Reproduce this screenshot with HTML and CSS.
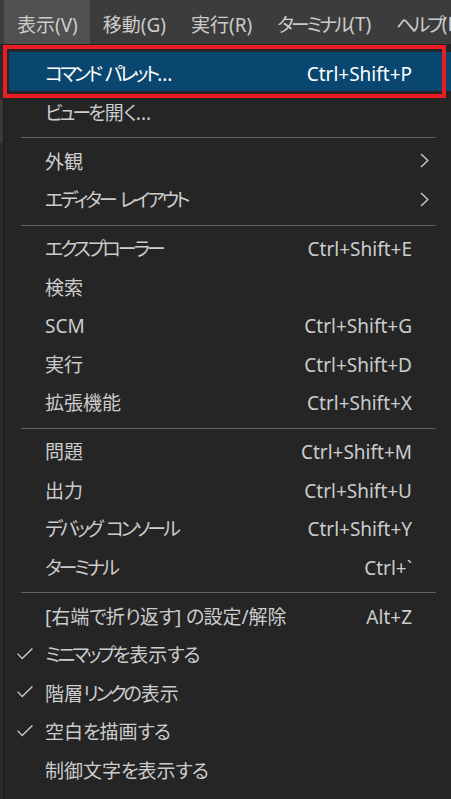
FILE: index.html
```html
<!DOCTYPE html>
<html lang="ja">
<head>
<meta charset="utf-8">
<link rel="stylesheet" href="styles.css">
</head>
<body>
<div class="menubar">
  <div class="mb-item active">表示(V)</div>
  <div class="mb-item">移動(G)</div>
  <div class="mb-item">実行(R)</div>
  <div class="mb-item"><span class="kn">ターミナル</span>(T)</div>
  <div class="mb-item"><span class="kn">ヘルプ</span>(H)</div>
</div>
<div class="row">
  <div class="edge"><div class="edge-mark"></div></div>
  <div class="menu">
    <div class="item selected"><span class="check"></span><span class="label"><span class="kn">コマンド</span> <span class="kn">パレット</span>...</span><span class="key">Ctrl+Shift+P</span><span class="sub"></span></div>
    <div class="item"><span class="check"></span><span class="label"><span class="kn">ビュー</span><span class="kh">を</span>開<span class="kh">く</span>...</span><span class="key"></span><span class="sub"></span></div>
    <div class="sep"></div>
    <div class="item"><span class="check"></span><span class="label">外観</span><span class="key"></span><span class="sub"><svg width="9" height="15" viewBox="0 0 9 15"><polyline points="1,1 7.8,7.5 1,14" fill="none" stroke="#cccccc" stroke-width="1.4"/></svg></span></div>
    <div class="item"><span class="check"></span><span class="label"><span class="kn">エディター</span> <span class="kn">レイアウト</span></span><span class="key"></span><span class="sub"><svg width="9" height="15" viewBox="0 0 9 15"><polyline points="1,1 7.8,7.5 1,14" fill="none" stroke="#cccccc" stroke-width="1.4"/></svg></span></div>
    <div class="sep"></div>
    <div class="item"><span class="check"></span><span class="label"><span class="kn">エクスプローラー</span></span><span class="key">Ctrl+Shift+E</span><span class="sub"></span></div>
    <div class="item"><span class="check"></span><span class="label">検索</span><span class="key"></span><span class="sub"></span></div>
    <div class="item"><span class="check"></span><span class="label">SCM</span><span class="key">Ctrl+Shift+G</span><span class="sub"></span></div>
    <div class="item"><span class="check"></span><span class="label">実行</span><span class="key">Ctrl+Shift+D</span><span class="sub"></span></div>
    <div class="item"><span class="check"></span><span class="label">拡張機能</span><span class="key">Ctrl+Shift+X</span><span class="sub"></span></div>
    <div class="sep"></div>
    <div class="item"><span class="check"></span><span class="label">問題</span><span class="key">Ctrl+Shift+M</span><span class="sub"></span></div>
    <div class="item"><span class="check"></span><span class="label">出力</span><span class="key">Ctrl+Shift+U</span><span class="sub"></span></div>
    <div class="item"><span class="check"></span><span class="label"><span class="kn">デバッグ</span> <span class="kn">コンソール</span></span><span class="key">Ctrl+Shift+Y</span><span class="sub"></span></div>
    <div class="item"><span class="check"></span><span class="label"><span class="kn">ターミナル</span></span><span class="key">Ctrl+`</span><span class="sub"></span></div>
    <div class="sep"></div>
    <div class="item"><span class="check"></span><span class="label">[右端<span class="kh">で</span>折<span class="kh">り</span>返<span class="kh">す</span>] <span class="kh">の</span>設定/解除</span><span class="key">Alt+Z</span><span class="sub"></span></div>
    <div class="item"><span class="check"><svg width="16" height="12" viewBox="0 0 16 12"><polyline points="0.6,5.6 5.2,10.6 15.4,0.6" fill="none" stroke="#cccccc" stroke-width="1.4"/></svg></span><span class="label"><span class="kn">ミニマップ</span><span class="kh">を</span>表示<span class="kh">する</span></span><span class="key"></span><span class="sub"></span></div>
    <div class="item"><span class="check"><svg width="16" height="12" viewBox="0 0 16 12"><polyline points="0.6,5.6 5.2,10.6 15.4,0.6" fill="none" stroke="#cccccc" stroke-width="1.4"/></svg></span><span class="label">階層<span class="kn">リンク</span><span class="kh">の</span>表示</span><span class="key"></span><span class="sub"></span></div>
    <div class="item"><span class="check"><svg width="16" height="12" viewBox="0 0 16 12"><polyline points="0.6,5.6 5.2,10.6 15.4,0.6" fill="none" stroke="#cccccc" stroke-width="1.4"/></svg></span><span class="label">空白<span class="kh">を</span>描画<span class="kh">する</span></span><span class="key"></span><span class="sub"></span></div>
    <div class="item"><span class="check"></span><span class="label">制御文字<span class="kh">を</span>表示<span class="kh">する</span></span><span class="key"></span><span class="sub"></span></div>
  </div>
</div>
<div class="annot"></div>
</body>
</html>
```

FILE: styles.css
```css
html, body {
  margin: 0;
  padding: 0;
  width: 451px;
  height: 799px;
  overflow: hidden;
}
body {
  background: #252526;
  color: #cccccc;
  font-family: "Noto Sans", "Noto Sans CJK JP", sans-serif;
  font-size: 19px;
  font-feature-settings: "palt";
  position: relative;
}
.kn {
  letter-spacing: -3px;
}
.kh {
  letter-spacing: -1px;
}
.menubar {
  display: flex;
  height: 44px;
  background: #3c3c3c;
  padding-left: 4px;
  white-space: nowrap;
  overflow: hidden;
}
.mb-item {
  display: flex;
  align-items: center;
  padding: 3px 12px 0 13px;
  color: #cccccc;
  flex-shrink: 0;
}
.mb-item.active {
  background: #505050;
}
.row {
  display: flex;
  height: 755px;
}
.edge {
  width: 3px;
  background: #2a2a2a;
  border-right: 1px solid #1b1b1b;
  flex-shrink: 0;
}
.edge-mark {
  margin-top: 56px;
  height: 43px;
  background: #3a3a3a;
}
.menu {
  flex: 1;
  padding: 8px 0 0 5px;
  box-sizing: border-box;
}
.item {
  display: grid;
  grid-template-columns: 36px 1fr auto 39px;
  align-items: center;
  height: 38.5px;
  white-space: nowrap;
}
.item.selected {
  background: #094771;
  color: #ffffff;
}
.check {
  display: flex;
  align-items: center;
  padding-left: 8px;
  padding-top: 3px;
}
.label {
  line-height: 1;
  padding-top: 7px;
}
.key {
  line-height: 1;
  padding-top: 7px;
}
.sub {
  display: flex;
  align-items: center;
  padding-left: 8px;
  padding-top: 4px;
}
.sep {
  height: 1px;
  background: #606060;
  margin: 8px 15px 1.5px 12px;
}
.annot {
  position: absolute;
  left: 3px;
  top: 45px;
  width: 443px;
  height: 53px;
  box-sizing: border-box;
  border: 4px solid #ec1c24;
}
```
